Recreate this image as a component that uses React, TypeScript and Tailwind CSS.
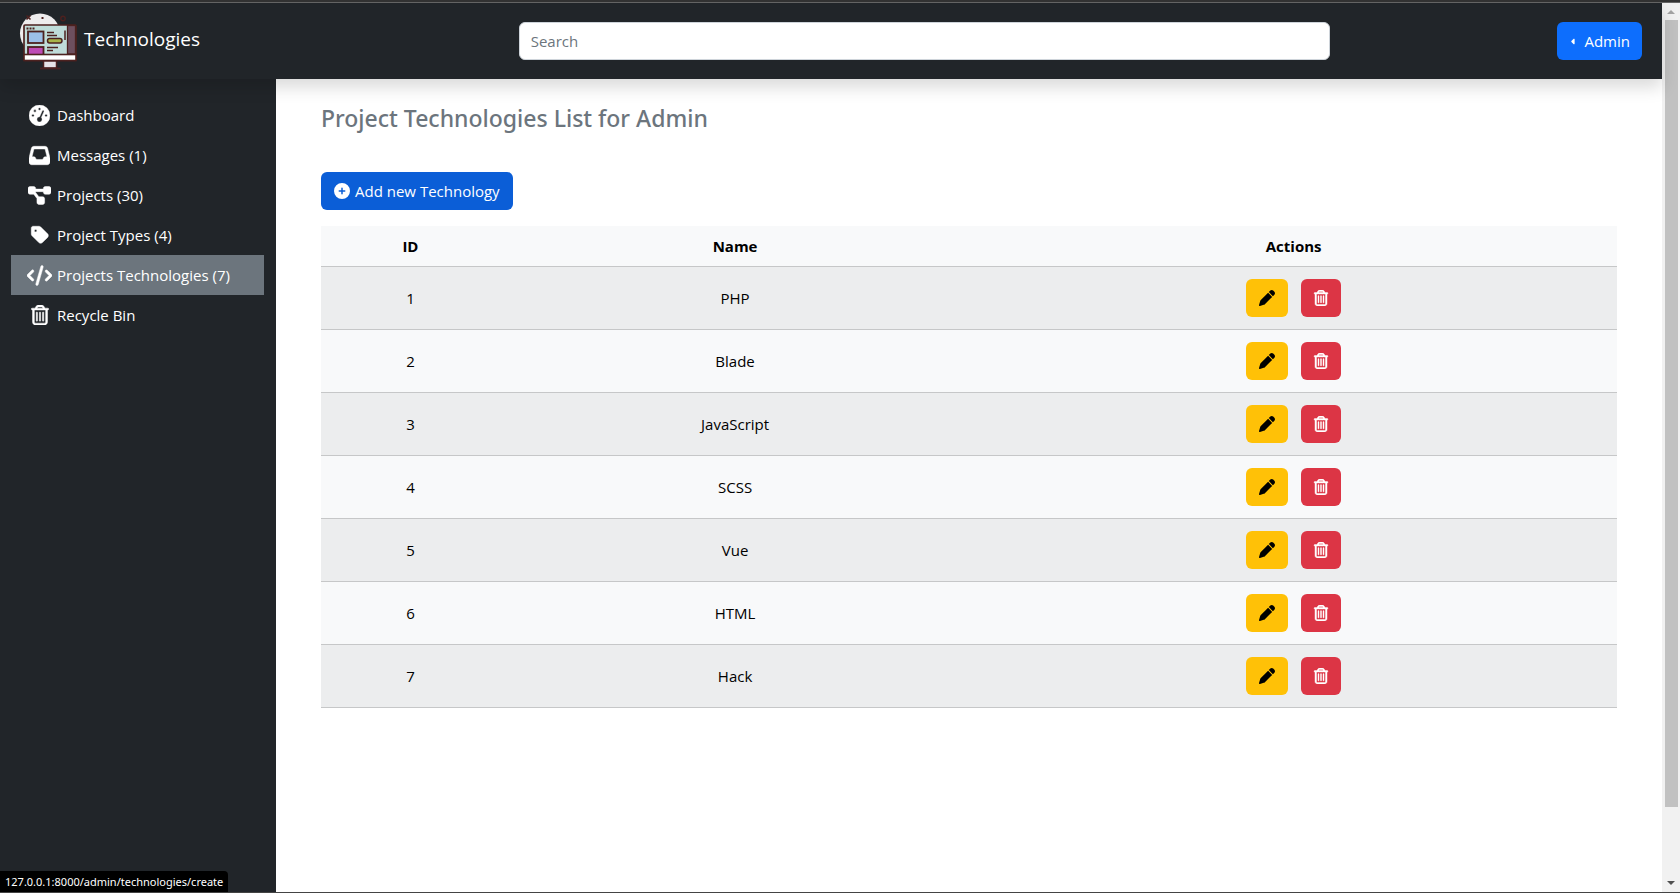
import React from "react";
import {
  FaCaretLeft,
  FaCirclePlus,
  FaCode,
  FaDiagramProject,
  FaGaugeHigh,
  FaInbox,
  FaPen,
  FaRegTrashCan,
  FaTag,
} from "react-icons/fa6";

const navItems = [
  { label: "Dashboard", icon: FaGaugeHigh, size: 21 },
  { label: "Messages (1)", icon: FaInbox, size: 21 },
  { label: "Projects (30)", icon: FaDiagramProject, size: 23 },
  { label: "Project Types (4)", icon: FaTag, size: 20 },
  { label: "Projects Technologies (7)", icon: FaCode, size: 25, active: true },
  { label: "Recycle Bin", icon: FaRegTrashCan, size: 20 },
];

const technologies = ["PHP", "Blade", "JavaScript", "SCSS", "Vue", "HTML", "Hack"];

function Logo() {
  return (
    <svg viewBox="0 0 58 60" className="h-[60px] w-[58px]" aria-hidden="true">
      <circle cx="21" cy="23.5" r="20" fill="#eeeced" />
      <rect x="22" y="38" width="36" height="22" fill="#212529" />
      <rect x="4" y="46" width="20" height="14" fill="#212529" />
      <path d="M7.500 5.500l4 4m0-4l-4 4" stroke="#4c211f" strokeWidth="1.6" />
      <rect x="22.500" y="7" width="2" height="2" fill="#4c211f" />
      <circle cx="44" cy="8.500" r="2.200" fill="none" stroke="#4c211f" strokeWidth="1.4" />
      <rect x="5" y="15" width="52" height="35.500" rx="1" fill="#bfdcd9" stroke="#4c211f" strokeWidth="1.700" />
      <rect x="48.500" y="15.500" width="8" height="28.500" fill="#6d4f5e" stroke="#4c211f" strokeWidth="1.300" />
      <path d="M7.500 18.500h8" stroke="#4c211f" strokeWidth="2" strokeDasharray="2 1" />
      <rect x="9" y="21.500" width="15.500" height="11.500" fill="#9bc0e8" stroke="#4c211f" strokeWidth="1.800" />
      <rect x="9" y="37" width="15.500" height="8" fill="#bd4bb5" stroke="#4c211f" strokeWidth="1.800" />
      <path d="M28 22.500h7M28 25.500h10M28 37.500h11M28 40.500h6M46 20.500v9.500" stroke="#4c211f" strokeWidth="1.500" />
      <rect x="28.500" y="28.500" width="14.500" height="4.500" rx="2.200" fill="#a7b44a" stroke="#4c211f" strokeWidth="1.500" />
      <rect x="5" y="44.500" width="52" height="6" fill="#fff" stroke="#4c211f" strokeWidth="1.600" />
      <rect x="24.500" y="51" width="13" height="7" fill="#e6e3e6" stroke="#4c211f" strokeWidth="1.500" />
      <path d="M21 58.500h20.500" stroke="#4c211f" strokeWidth="1.800" />
    </svg>
  );
}

function Header() {
  return (
    <header className="relative z-10 flex h-[76px] items-center bg-[#212529] pr-5 pl-[19px] shadow-[0_8px_16px_rgba(0,0,0,0.15)]">
      <div className="flex flex-[8] pb-0.5">
        <a href="#" className="flex items-center gap-[7px] text-[19px] text-white">
          <Logo />
          <span className="pb-0.5">Technologies</span>
        </a>
      </div>
      <input
        type="search"
        aria-label="Search"
        placeholder="Search"
        className="h-[38px] w-1/2 max-w-[811px] rounded-md border border-[#ced4da] bg-white px-[11px] text-[15px] text-[#212529] placeholder:text-[#6c757d]"
      />
      <div className="flex flex-[5] justify-end">
        <button type="button" className="flex h-[38px] items-center gap-1.5 rounded-md bg-[#0d6efd] px-3 text-[15px] text-white">
          <FaCaretLeft size={9} />
          Admin
        </button>
      </div>
    </header>
  );
}

function Sidebar() {
  return (
    <nav aria-label="Main" className="w-[276px] shrink-0 bg-[#212529] pt-4 pr-3 pl-[11px]">
      <ul>
        {navItems.map(({ label, icon: Icon, size, active }) => (
          <li key={label}>
            <a
              href="#"
              className={`flex h-10 items-center gap-[5px] pl-4 text-[15px] text-white ${active ? "bg-[#6c757d]" : ""}`}
            >
              <span className="flex w-[25px] shrink-0 justify-center">
                <Icon size={size} stroke="currentColor" strokeWidth={12} />
              </span>
              {label}
            </a>
          </li>
        ))}
      </ul>
    </nav>
  );
}

function TechnologyTable() {
  return (
    <table className="mt-4 w-full table-fixed border-collapse bg-[#f8f9fa] text-center text-[15px] text-black">
      <thead>
        <tr className="h-10 border-b border-[#c6c7c8]">
          <th className="w-[13.8%] font-bold">ID</th>
          <th className="w-[36.3%] font-bold">Name</th>
          <th className="font-bold">Actions</th>
        </tr>
      </thead>
      <tbody>
        {technologies.map((name, i) => (
          <tr key={name} className="h-[63px] border-b border-[#c6c7c8] odd:bg-[#ecedee]">
            <td className="pt-px">{i + 1}</td>
            <td className="pt-px">{name}</td>
            <td>
              <div className="flex justify-center gap-[13px]">
                <button type="button" aria-label={`Edit ${name}`} className="flex h-[38px] w-[42px] items-center justify-center rounded-md bg-[#ffc107] text-black">
                  <FaPen size={16} />
                </button>
                <button type="button" aria-label={`Delete ${name}`} className="flex h-[38px] w-10 items-center justify-center rounded-md bg-[#dc3545] text-white">
                  <FaRegTrashCan size={16} stroke="currentColor" strokeWidth={14} />
                </button>
              </div>
            </td>
          </tr>
        ))}
      </tbody>
    </table>
  );
}

function Scrollbar() {
  return (
    <div aria-hidden="true" className="flex w-[18px] shrink-0 flex-col items-center bg-[#f1f1f1]">
      <svg viewBox="0 0 18 17" className="h-[17px] w-[18px]"><path d="M5 11l4-4 4 4z" fill="#a3a3a3" /></svg>
      <div className="w-[13px] grow-[92] bg-[#c1c1c1]" />
      <div className="grow-[8]" />
      <svg viewBox="0 0 18 17" className="h-[17px] w-[18px]"><path d="M5 6l4 4 4-4z" fill="#505050" /></svg>
    </div>
  );
}

export default function App() {
  return (
    <div className="flex min-h-screen flex-col border-b border-[#444] bg-white font-['Open_Sans','Noto_Sans',sans-serif]">
      <div className="h-[3px] border-b border-[#666] bg-[#333]" />
      <div className="flex grow">
        <div className="flex min-w-0 grow flex-col">
          <Header />
          <div className="flex grow">
            <Sidebar />
            <main className="min-w-0 grow px-[45px] pt-[23px]">
              <h1 className="font-['Noto_Sans',sans-serif] text-[23px] leading-8 font-medium text-[#6c757d]">Project Technologies List for Admin</h1>
              <button type="button" className="mt-[38px] flex h-[38px] items-center gap-[5px] rounded-md bg-[#0b5ed7] px-[13px] text-[15px] text-white">
                <FaCirclePlus size={16} />
                Add new Technology
              </button>
              <TechnologyTable />
            </main>
          </div>
        </div>
        <Scrollbar />
      </div>
      <div className="fixed bottom-px left-0 z-20 rounded-tr bg-black px-[5px] font-['Noto_Sans',sans-serif] text-[11px] leading-[21px] text-white">
        127.0.0.1:8000/admin/technologies/create
      </div>
    </div>
  );
}
